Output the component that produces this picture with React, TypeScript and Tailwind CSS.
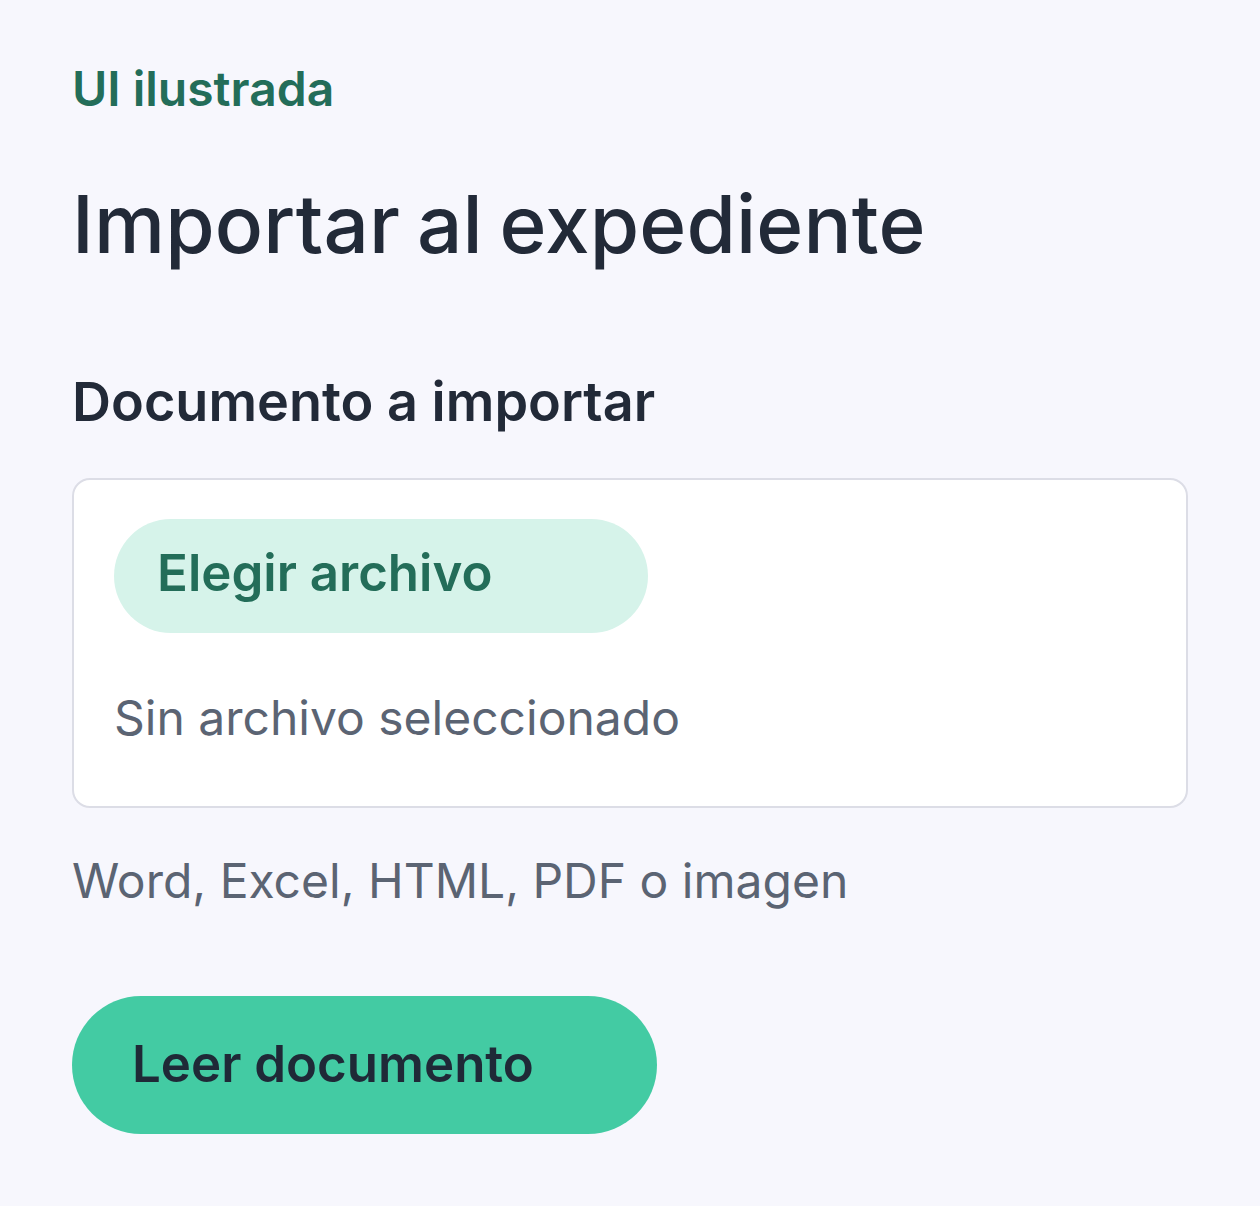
import React from "react";

export default function App() {
  return (
    <div
      className="min-h-[1206px] w-full bg-[#f7f7fd] px-[72px] pt-[61px] pb-[72px]"
      style={{ fontFamily: "Inter, 'Noto Sans', sans-serif" }}
    >
      <div className="text-[48px] leading-[56px] font-semibold text-[#236d59]">UI ilustrada</div>
      <h1 className="mt-[59px] text-[80px] leading-[96px] font-medium tracking-[0.002em] [word-spacing:-0.06em] text-[#222a38]">
        Importar al expediente
      </h1>
      <h2 className="mt-[98px] text-[54px] leading-[64px] font-semibold text-[#222a38]">
        Documento a importar
      </h2>
      <div className="mt-[44px] rounded-[18px] border-2 border-[#dcdde6] bg-white px-[40px] pt-[39px] pb-[59px]">
        <button className="flex h-[114px] w-[534px] items-center rounded-full bg-[#d6f3ea] pl-[43px] pb-[6px] text-[51px] font-semibold text-[#236d59]">
          Elegir archivo
        </button>
        <div className="mt-[56px] text-[48px] leading-[58px] text-[#5b6473]">Sin archivo seleccionado</div>
      </div>
      <div className="mt-[44px] text-[48px] leading-[58px] text-[#5b6473]">Word, Excel, HTML, PDF o imagen</div>
      <button className="mt-[86px] flex h-[138px] w-[585px] items-center rounded-full bg-[#43cba3] pl-[60px] pb-[2px] text-[51px] font-semibold text-[#1f2937]">
        Leer documento
      </button>
    </div>
  );
}
